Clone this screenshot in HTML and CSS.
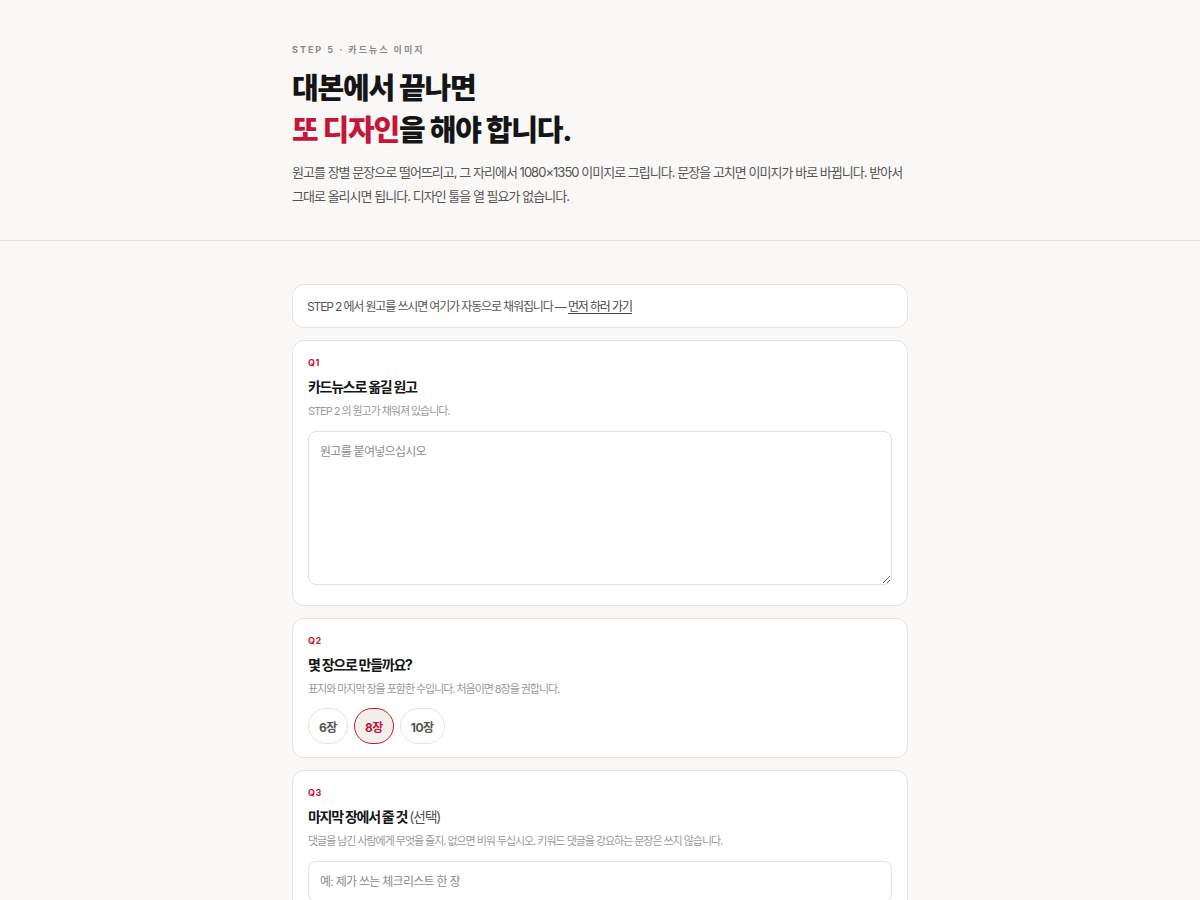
FILE: index.html
```html
<!DOCTYPE html>
<html lang="ko">
<head>
<meta charset="utf-8">
<link rel="stylesheet" href="styles.css">
</head>
<body>
<header class="hero">
  <div class="wrap">
    <div class="eyebrow">STEP 5 · 카드뉴스 이미지</div>
    <h1 class="title">대본에서 끝나면<br><span class="accent">또 디자인</span>을 해야 합니다.</h1>
    <p class="lead">원고를 장별 문장으로 떨어뜨리고, 그 자리에서 1080×1350 이미지로 그립니다. 문장을 고치면 이미지가 바로 바뀝니다. 받아서 그대로 올리시면 됩니다. 디자인 툴을 열 필요가 없습니다.</p>
  </div>
</header>
<main class="wrap main">
  <div class="card notice">STEP 2 에서 원고를 쓰시면 여기가 자동으로 채워집니다 — <a href="#" class="link">먼저 하러 가기</a></div>
  <section class="card q q1">
    <div class="qnum">Q1</div>
    <h2 class="qtitle">카드뉴스로 옮길 원고</h2>
    <p class="qsub">STEP 2 의 원고가 채워져 있습니다.</p>
    <textarea class="area" placeholder="원고를 붙여넣으십시오"></textarea>
  </section>
  <section class="card q q2">
    <div class="qnum">Q2</div>
    <h2 class="qtitle">몇 장으로 만들까요?</h2>
    <p class="qsub">표지와 마지막 장을 포함한 수입니다. 처음이면 8장을 권합니다.</p>
    <div class="pills">
      <button class="pill">6장</button>
      <button class="pill on">8장</button>
      <button class="pill">10장</button>
    </div>
  </section>
  <section class="card q q3">
    <div class="qnum">Q3</div>
    <h2 class="qtitle">마지막 장에서 줄 것 <span class="opt">(선택)</span></h2>
    <p class="qsub">댓글을 남긴 사람에게 무엇을 줄지. 없으면 비워 두십시오. 키워드 댓글을 강요하는 문장은 쓰지 않습니다.</p>
    <input class="field" type="text" placeholder="예: 제가 쓰는 체크리스트 한 장">
  </section>
</main>
</body>
</html>
```
FILE: styles.css
```css
* { box-sizing: border-box; }
html, body { margin: 0; padding: 0; }
body {
  background: #f9f8f6;
  font-family: "Inter", "Noto Sans CJK KR", sans-serif;
  color: #111;
  word-break: keep-all;
}
.wrap { width: 616px; margin: 0 auto; }
.hero {
  border-bottom: 1px solid #e6e3df;
  padding: 44px 0 32px;
}
.eyebrow {
  font-size: 9px;
  font-weight: 700;
  letter-spacing: 2px;
  color: #8a8a8a;
  line-height: 12px;
}
.title {
  margin: 12px 0 0;
  font-size: 29px;
  font-weight: 800;
  line-height: 42px;
  letter-spacing: -1.2px;
  color: #151515;
}
.accent { color: #c4163a; }
.lead {
  margin: 8px 0 0;
  font-size: 13px;
  line-height: 24px;
  color: #555;
  letter-spacing: -0.075em;
}
.main { padding: 43px 0 40px; display: flex; flex-direction: column; gap: 12px; }
.card {
  background: #fff;
  border: 1px solid #e6e3df;
  border-radius: 12px;
}
.notice {
  padding: 14px 14px 12px;
  font-size: 12px;
  line-height: 16px;
  color: #555;
  letter-spacing: -0.095em;
}
.link { color: #444; text-decoration: underline; text-underline-offset: 2px; }
.q { padding: 16px 15px 21px; }
.q1 { padding-bottom: 20px; }
.qnum {
  font-size: 9px;
  font-weight: 700;
  color: #c4163a;
  line-height: 12px;
  letter-spacing: 0.5px;
}
.qtitle {
  margin: 9px 0 0;
  font-size: 14px;
  font-weight: 700;
  line-height: 18px;
  letter-spacing: -0.09em;
  color: #141414;
}
.opt { font-weight: 400; color: #555; }
.qsub {
  margin: 8px 0 0;
  font-size: 11px;
  line-height: 14px;
  color: #9a9a9a;
  letter-spacing: -0.095em;
}
.area {
  display: block;
  width: 100%;
  height: 154px;
  margin-top: 13px;
  border: 1px solid #e3e1de;
  border-radius: 8px;
  padding: 11px 11px;
  font-family: inherit;
  font-size: 12px;
  line-height: 18px;
  letter-spacing: -0.06em;
  color: #333;
  background: #fff;
  resize: vertical;
}
.area::placeholder, .field::placeholder { color: #8c8c8c; }
.q2 { padding-bottom: 13px; }
.pills { display: flex; gap: 6px; margin-top: 12px; }
.pill {
  height: 36px;
  padding: 0 10px;
  border-radius: 18px;
  border: 1px solid #e6e3df;
  background: #fff;
  font-family: inherit;
  font-size: 12px;
  font-weight: 700;
  letter-spacing: -0.04em;
  color: #555;
}
.pill.on {
  border-color: #c4163a;
  background: #f3efea;
  color: #c4163a;
}
.q3 { padding-bottom: 16px; }
.field {
  display: block;
  width: 100%;
  height: 41px;
  margin-top: 13px;
  border: 1px solid #e3e1de;
  border-radius: 8px;
  padding: 0 11px;
  font-family: inherit;
  font-size: 12px;
  letter-spacing: -0.06em;
  color: #333;
  background: #fff;
}
```
